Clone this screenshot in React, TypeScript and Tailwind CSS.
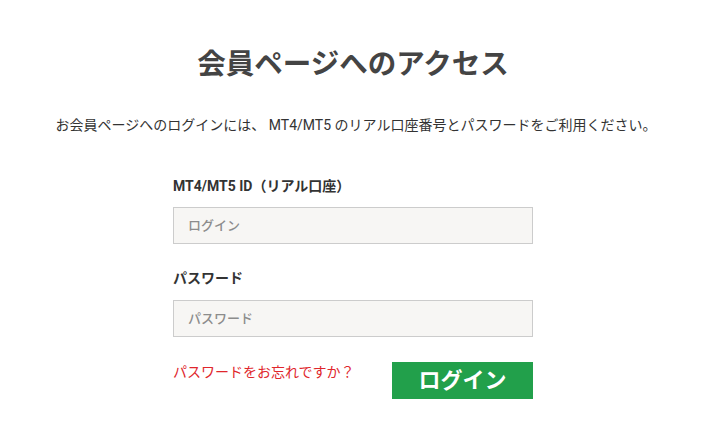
import React from 'react';

const font = { fontFamily: 'Roboto, "Noto Sans CJK JP", sans-serif' };

function App() {
  return (
    <div
      className="min-h-screen bg-white flex flex-col items-center pr-[13px] pt-[45px] text-[#333]"
      style={font}
    >
      <h1 className="text-[28.5px] leading-[40px] font-bold text-[#444]">
        会員ページへのアクセス
      </h1>
      <p className="mt-[30px] ml-[6px] text-[14px] leading-[20px] text-[#333]">
        お会員ページへのログインには、 MT4/MT5 のリアル口座番号とパスワードをご利用ください。
      </p>

      <form className="mt-[41px] w-[360px] flex flex-col" onSubmit={(e) => e.preventDefault()}>
        <label className="text-[14px] leading-[20px] font-bold text-[#333]">
          MT4/MT5 ID（リアル口座）
        </label>
        <input
          type="text"
          placeholder="ログイン"
          className="mt-[11px] h-[37px] w-full bg-[#f7f6f4] border border-[#cccccc] px-[14px] text-[13px] font-medium placeholder:text-[#8c8c8c] outline-none"
        />

        <label className="mt-[24px] text-[14px] leading-[20px] font-bold text-[#333]">
          パスワード
        </label>
        <input
          type="password"
          placeholder="パスワード"
          className="mt-[12px] h-[37px] w-full bg-[#f7f6f4] border border-[#cccccc] px-[14px] text-[13px] font-medium placeholder:text-[#8c8c8c] outline-none"
        />

        <div className="mt-[25px] flex items-start justify-between">
          <a href="#" className="text-[14px] leading-[20px] text-[#e0262c]">
            パスワードをお忘れですか？
          </a>
          <button
            type="submit"
            className="w-[141px] h-[37px] bg-[#22a04b] text-white text-[22px] font-bold leading-none"
          >
            ログイン
          </button>
        </div>
      </form>
    </div>
  );
}

export default App;
